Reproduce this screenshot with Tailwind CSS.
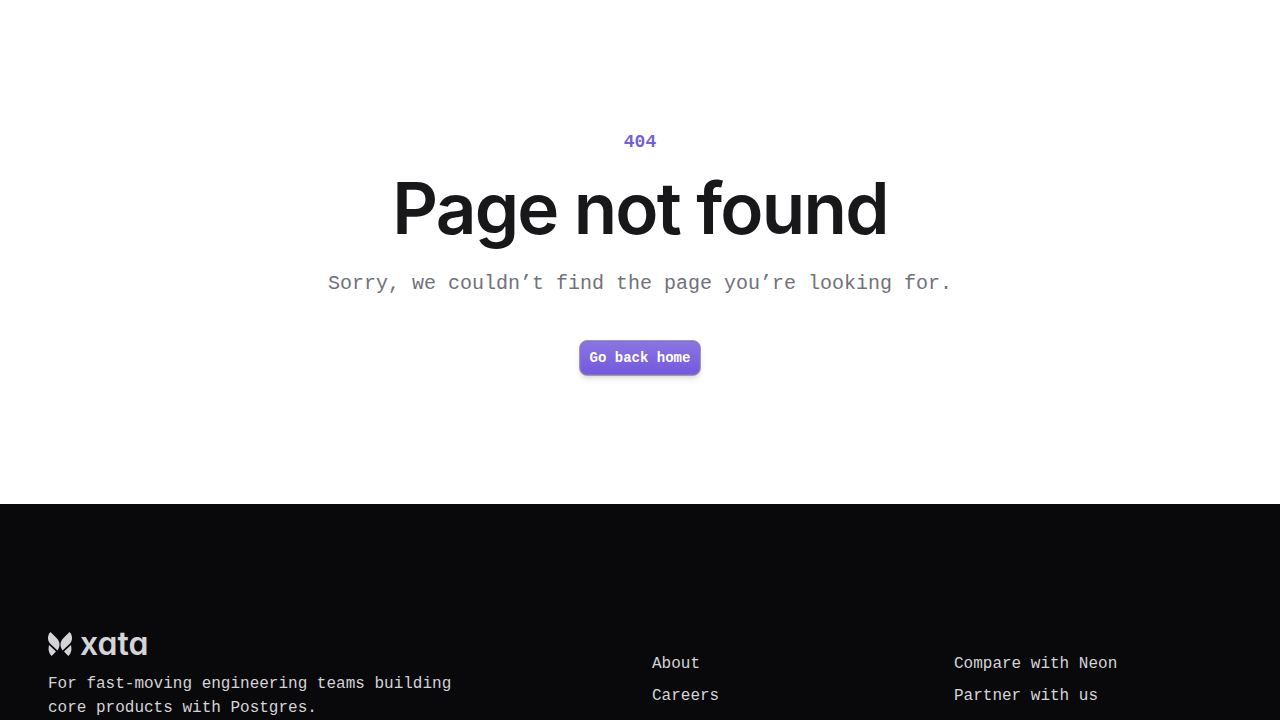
<!DOCTYPE html>
<html lang="en">
<head>
  <meta charset="UTF-8">
  <meta name="viewport" content="width=device-width, initial-scale=1.0">
  <script src="https://cdn.jsdelivr.net/npm/@tailwindcss/browser@4"></script>
  <title>Page not found - Xata</title>
</head>
<body class="bg-white font-['Liberation_Mono',monospace]">
  <main class="px-6 py-32 text-center">
    <p class="text-lg leading-7 font-bold text-[#7461d4]">404</p>
    <h1 class="mt-4 font-[Inter,sans-serif] text-[71px] leading-[72px] font-semibold tracking-tight text-zinc-900">Page not found</h1>
    <p class="mt-6 text-xl leading-8 text-zinc-500">Sorry, we couldn’t find the page you’re looking for.</p>
    <div class="mt-10 flex justify-center">
      <a href="/" class="flex h-9 items-center rounded-lg border border-[#9d97bd] bg-linear-to-b from-[#8b76e2] to-[#7357dc] bg-origin-border px-2.5 text-sm font-bold text-white shadow-md inset-ring inset-ring-[#8272cc]">Go back home</a>
    </div>
  </main>

  <footer class="bg-[#09090b] px-12 py-32 text-zinc-300">
    <div class="grid grid-cols-4 gap-6">
      <div class="col-span-2">
        <!-- Logo -->
        <a href="/" class="flex h-6 items-center gap-2">
          <svg class="size-6" viewBox="0 0 24 24" fill="currentColor" aria-hidden="true">
            <path d="M2.500 0 8.500 6C10.600 8.100 11.500 10.200 11.500 12.500c0 2-.7 4.200-2 6L2.500 12C.8 10.300 0 8.200 0 6 0 3.800.9 1.600 2.500 0Z" />
            <path d="M21.500 0 15.500 6c-2.100 2.100-3 4.200-3 6.500 0 2 .7 4.200 2 6L21.500 12C23.200 10.300 24 8.200 24 6c0-2.200-.9-4.400-2.500-6Z" />
            <path d="M1 13 8 19.500 3.700 24C1.600 21.800.6 19.600.6 17.200.6 15.800.7 14.500 1 13Z" />
            <path d="M23 13 16 19.500 20.300 24c2.100-2.200 3.100-4.400 3.100-6.800 0-1.400-.1-2.700-.4-4.200Z" />
          </svg>
          <span class="font-[Inter,sans-serif] text-[32px] leading-6 font-semibold [font-feature-settings:'cv11']">xata</span>
        </a>
        <p class="mt-4 max-w-md">For fast-moving engineering teams building core products with Postgres.</p>
      </div>
      <ul class="space-y-2 pt-5">
        <li><a href="/about" class="hover:text-white">About</a></li>
        <li><a href="/careers" class="hover:text-white">Careers</a></li>
      </ul>
      <ul class="space-y-2 pt-5">
        <li><a href="/compare/neon" class="hover:text-white">Compare with Neon</a></li>
        <li><a href="/partners" class="hover:text-white">Partner with us</a></li>
      </ul>
    </div>
  </footer>
</body>
</html>
